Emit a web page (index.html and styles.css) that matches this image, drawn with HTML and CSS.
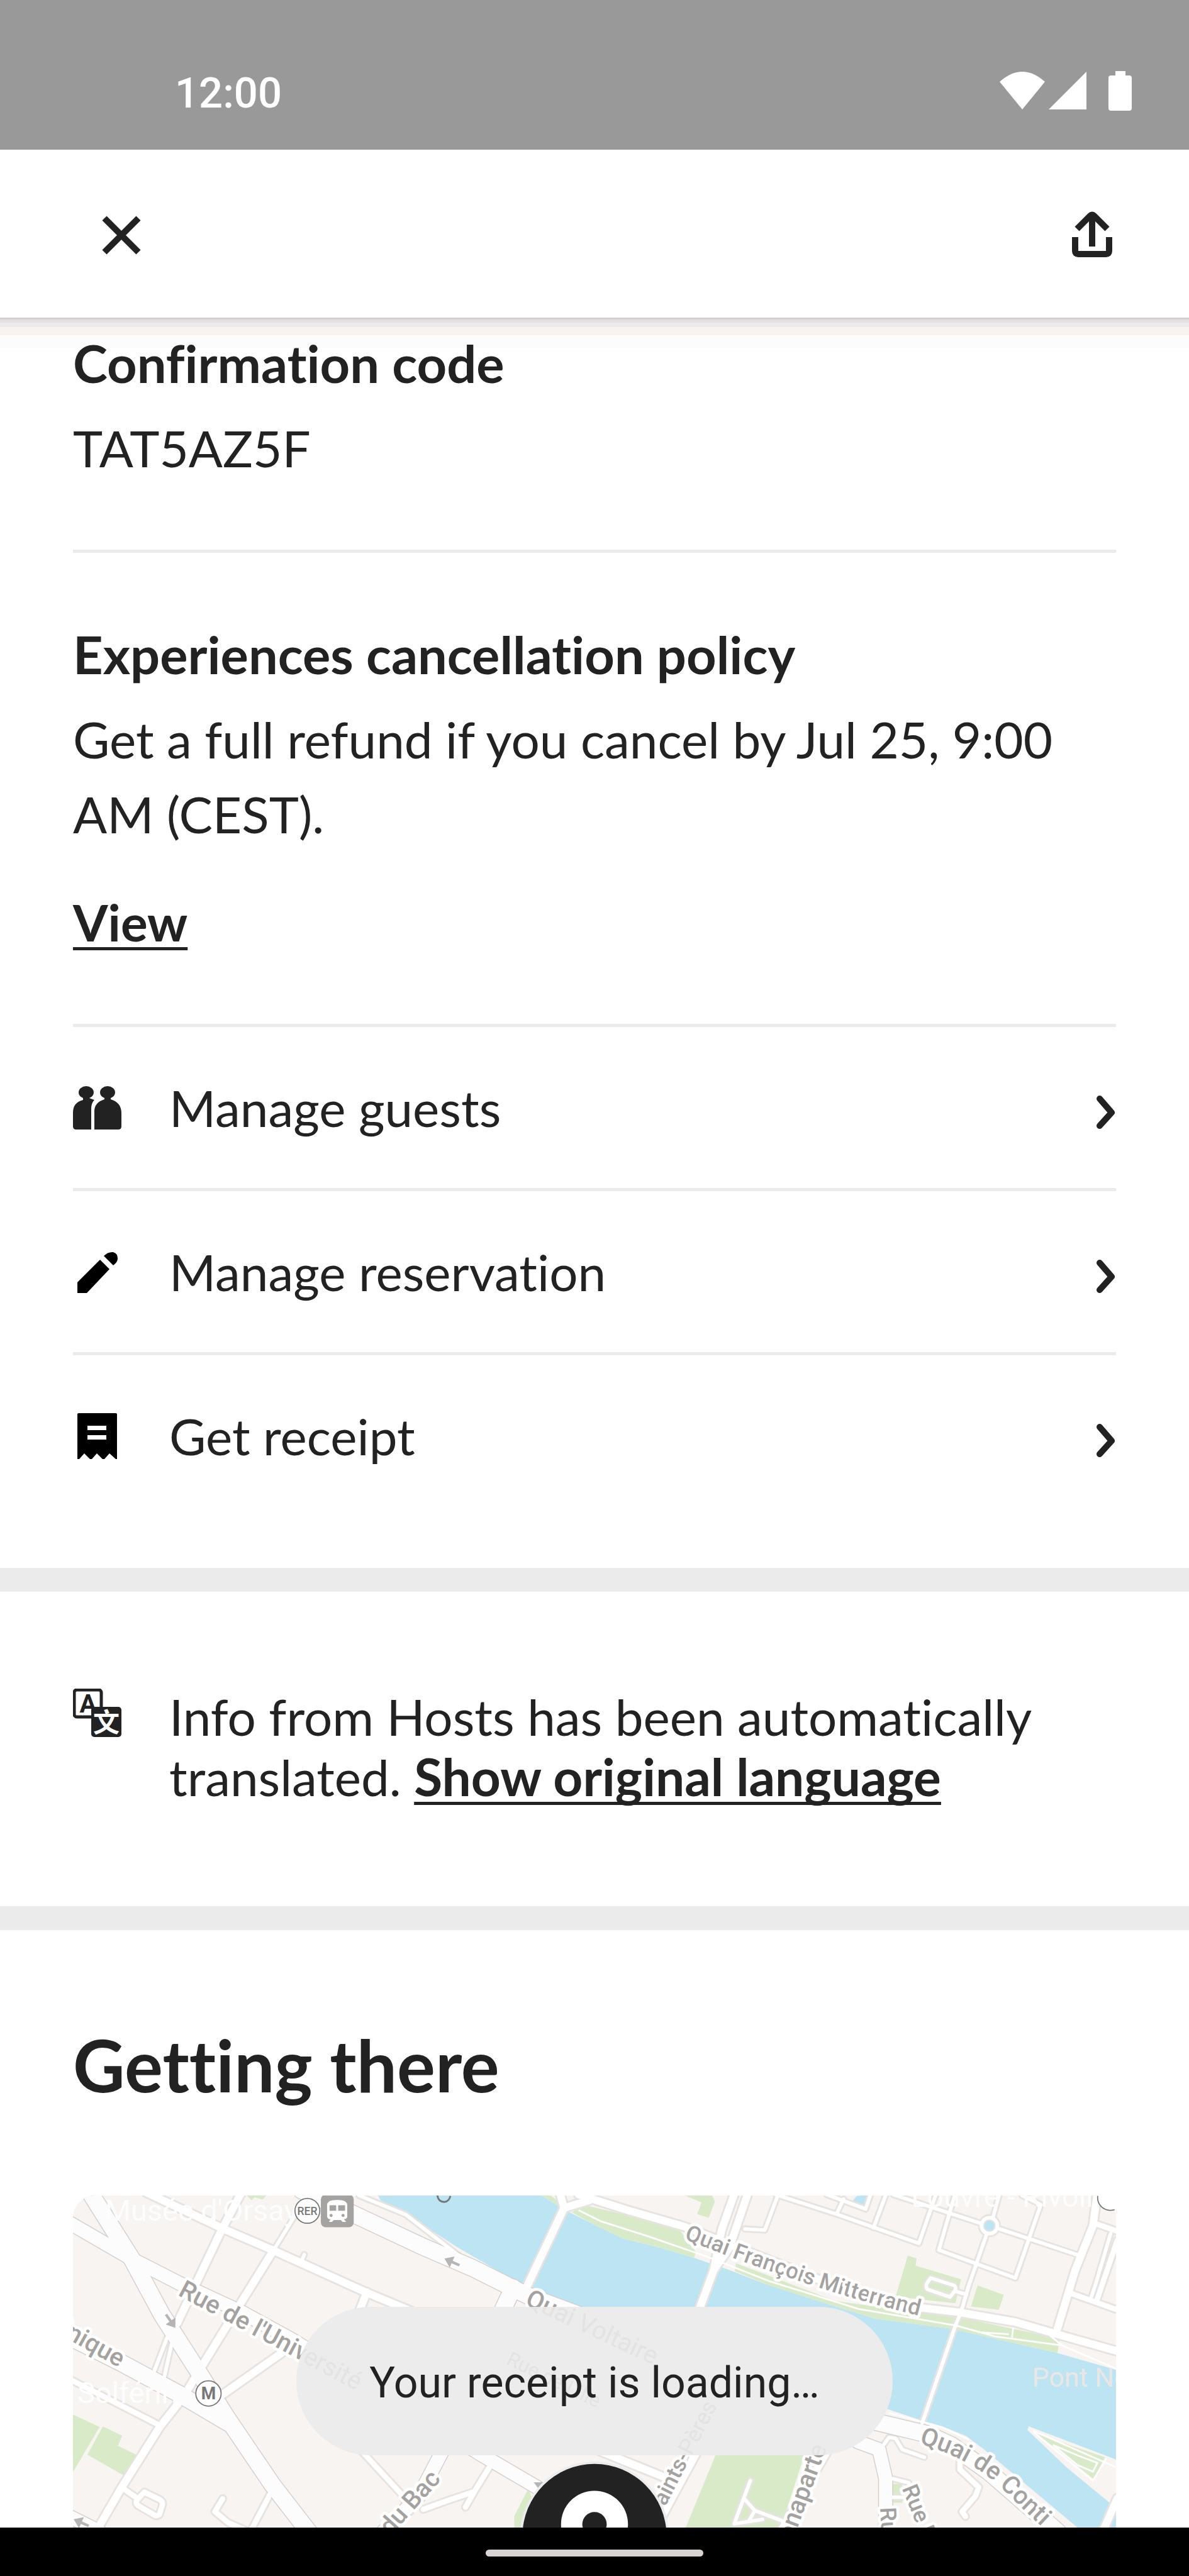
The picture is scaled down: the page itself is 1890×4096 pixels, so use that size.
FILE: index.html
```html
<!DOCTYPE html>
<html lang="en">
<head>
    <meta charset="UTF-8">
    <meta name="viewport" content="width=device-width, initial-scale=1.0">
    <title>Reservation details</title>
    <link rel="stylesheet" href="styles.css">
</head>
<body>
    <div class="status_bar">
        <span class="clock">12:00</span>
        <svg class="status_icons" viewBox="0 0 210 63">
            <path d="M0 17 Q36 -15 72 17 L36 61 Z"/>
            <path d="M78 61 L138 1 V61 Z"/>
            <path d="M184 0 H200 V7 H206 Q210 7 210 11 V59 Q210 63 206 63 H177 Q173 63 173 59 V11 Q173 7 177 7 H184 Z"/>
        </svg>
    </div>
    <header class="top_bar">
        <button class="icon_btn" type="button" aria-label="Close">
            <svg viewBox="0 0 78 78"><path d="M12 12 L66 66 M66 12 L12 66"/></svg>
        </button>
        <button class="icon_btn" type="button" aria-label="Share">
            <svg viewBox="0 0 78 78"><path d="M39 57 V8 M15 29 L36 8 Q39 5 42 8 L63 29 M12 42 V64 Q12 69 17 69 H61 Q66 69 66 64 V42"/></svg>
        </button>
    </header>

    <main>
        <section class="block first">
            <h2>Confirmation code</h2>
            <p>TAT5AZ5F</p>
        </section>
        <section class="block">
            <h2>Experiences cancellation policy</h2>
            <p>Get a full refund if you cancel by Jul 25, 9:00 AM (CEST).</p>
            <a class="view" href="#">View</a>
        </section>
        <nav class="rows">
            <a class="row" href="#">
                <svg class="icon" viewBox="0 0 77 77">
                    <ellipse cx="21" cy="14" rx="12" ry="10"/><ellipse cx="55" cy="14" rx="12" ry="10"/>
                    <path d="M16 20 H26 V23 L34 26 Q29 31 29 40 V73 H5 Q0 73 0 68 V46 Q0 30 16 26 Z"/>
                    <path d="M50 20 H60 V25 Q77 30 77 47 V68 Q77 73 72 73 H34 V44 Q34 30 50 25 Z"/>
                </svg>
                <span>Manage guests</span>
                <svg class="chevron" viewBox="0 0 32 77"><path d="M6 24 L25 46 L6 67"/></svg>
            </a>
            <a class="row" href="#">
                <svg class="icon black" viewBox="0 0 77 77">
                    <path d="M7 72 V55 L43 19 L58 34 L22 72 Z"/>
                    <path d="M49 13 Q56 6 64 7 Q71 9 71 17 Q71 23 64 28 Z"/>
                </svg>
                <span>Manage reservation</span>
                <svg class="chevron" viewBox="0 0 32 77"><path d="M6 24 L25 46 L6 67"/></svg>
            </a>
            <a class="row" href="#">
                <svg class="icon black" viewBox="0 0 77 77">
                    <path fill-rule="evenodd" d="M7 4 Q7 2 9 2 H68 Q70 2 70 4 V75 H68 L58 66 L50 75 H47 L38 66 L30 75 H27 L18 66 L10 75 H7 Z M23 22 V29 H53 V22 Z M23 37 V44 H53 V37 Z"/>
                </svg>
                <span>Get receipt</span>
                <svg class="chevron" viewBox="0 0 32 77"><path d="M6 24 L25 46 L6 67"/></svg>
            </a>
        </nav>
        <section class="translate">
            <svg class="icon" viewBox="0 0 77 77">
                <rect class="frame" x="2" y="2" width="43" height="43" rx="4"/>
                <text class="latin" x="24" y="38">A</text>
                <rect x="29" y="29" width="48" height="48" rx="5"/>
                <text class="han" x="53" y="69">文</text>
            </svg>
            <p>Info from Hosts has been automatically translated. <a href="#">Show original language</a></p>
        </section>
        <section class="there">
            <h1>Getting there</h1>
            <div class="map">
                <svg class="map_art" viewBox="0 64 4704 1498">
                    <defs>
                        <g id="streets">
                            <path class="w4" d="M330 50 L680 215 L900 310 L1320 500 L1560 600"/>
                            <path class="w4" d="M760 50 L670 220 L470 640"/>
                            <path class="w2" d="M1010 140 L905 310"/>
                            <path class="w4" d="M905 310 L750 560 L590 820 L500 970 L390 1110 L220 1380 L110 1570"/>
                            <path class="w2" d="M430 690 L365 860 M450 710 L410 890"/>
                            <path class="w4" d="M670 965 L940 775"/>
                            <path class="w3" d="M-10 895 L390 1100"/>
                            <path class="w3" d="M225 1385 L290 1430 M322 1402 L392 1436 Q408 1446 402 1464 L390 1502 Q382 1512 368 1506 L292 1462 Q280 1450 290 1436 Z"/>
                            <path class="w3" d="M675 1432 L640 1490 L700 1540 L780 1575 M895 1400 L800 1580"/>
                            <path class="w2" d="M1043 330 L1030 362"/>
                            <path class="w4" d="M1325 500 L1290 590"/>
                            <path class="w3" d="M1300 1215 L1480 1410 L1520 1490"/>
                            <path class="w3" d="M1890 1270 L1810 1400 L1690 1440 L1580 1480 M1810 1400 L1770 1470"/>
                            <path class="w4" d="M2360 1210 L2680 1340 M2820 1210 L2630 1560"/>
                            <path class="w2" d="M1290 64 L1500 150 L1740 335"/>
                            <path class="w4" d="M2280 60 L2500 130 L2760 205 L3000 300 L3560 520 L3820 570 L3990 590 L4250 635 L4440 690 L4704 765"/>
                            <path class="w4" d="M2195 50 L2215 120 L2040 490 M2330 85 L2215 120"/>
                            <path class="w4" d="M2985 50 L2925 220 L2890 400 L2820 590 M3045 50 L2960 300 L2890 400"/>
                            <path class="w2" d="M4040 470 L4005 590 L3980 650 L3830 1090"/>
                            <path class="w2" d="M3180 60 L3120 220 L3030 215 M3170 60 L3450 150 L3815 280 L3895 50 M3610 210 L3670 50 M3445 145 L3475 80 M3400 60 L3575 125 L3600 50"/>
                            <path class="w2" d="M3980 50 L3905 310 L4250 436 L4365 105 L4280 64 M3700 60 L4095 190 M4180 215 L4540 335 M4180 50 L4150 160 M4120 240 L4040 470"/>
                            <circle class="w2" cx="4133" cy="200" r="36"/>
                            <path class="w4" d="M4620 50 L4600 200 L4520 400 L4440 665"/>
                            <path class="w3" d="M4610 190 L4710 225 M4500 505 L4710 580 M4710 265 L4620 530"/>
                            <path class="w2" d="M4680 235 L4610 470 L4590 530"/>
                            <path class="w2" d="M3868 436 L3975 470 Q3986 480 3976 496 L3955 522 L3855 488 Q3845 480 3850 462 Z M3985 498 L4030 510"/>
                            <path class="w2" d="M3655 1190 L3680 1155 L3710 1160 L3740 1210 L3840 1245 M3690 1340 L3770 1360 M3690 1425 L3760 1425"/>
                            <path class="w3" d="M4000 1260 L4000 1300 L4085 1380 L4070 1420 L4010 1490 L4025 1512"/>
                            <path class="w2" d="M3055 1350 L3025 1430 L2982 1545 L3110 1525 M3025 1430 L3075 1485 L3050 1530 M3075 1485 L3220 1540"/>
                            <path class="w4" d="M3400 1220 L3180 1600 M4640 1590 L4710 1430"/>
                        </g>
                        <g id="avenues">
                            <path class="w7" d="M1030 40 L1270 150 L1568 290 L1800 390 L1960 470 L2060 520 L3000 870 L3620 1085 L3850 1140"/>
                            <path class="w7" d="M3850 1140 L3960 1190 L4130 1310 L4440 1580"/>
                            <path class="w7" d="M1985 480 L1920 620"/>
                            <path class="w7" d="M70 40 L265 350 L400 600 L560 850 L690 1060 L900 1370 L1070 1590"/>
                            <path class="w6" d="M-20 185 L265 350 L480 460 L760 590 L980 710 L1870 1250 L2160 1420"/>
                            <path class="w7" d="M-20 700 L220 820 L480 960 L700 1090"/>
                            <path class="w6" d="M1680 1190 L1560 1420 L1390 1590 M-10 1515 L120 1580"/>
                            <path class="w6" d="M3540 1175 L3635 1210 L3665 1340 L3665 1590"/>
                        </g>
                        <path id="mitterrand" d="M2755 260 L2975 345 Q3150 410 3360 478 T3830 610"/>
                        <path id="conti" d="M3815 1182 Q4060 1255 4200 1395 T4460 1640"/>
                    </defs>
                    <rect class="land" y="64" width="4704" height="1498"/>
                    <path class="water" d="M1374 60 L1395 100 L1480 135 L1568 190 L1738 300 L2005 455 L2090 490 L2140 520 L2290 565 L3681 1030 L3815 1075 L3920 1105 L4030 1150 L4110 1210 L4540 1570 H4710 V852 L4440 775 L4270 735 L3960 665 L3620 620 L3440 565 L3136 468 L2960 400 L2800 345 L2650 300 L2480 258 L2340 190 L2240 140 L2105 60 Z"/>
                    <path class="land" d="M4310 1105 L4710 1257 V1480 L4675 1450 L4480 1290 L4305 1122 Z"/>
                    <g class="green">
                        <path d="M2105 60 H2150 L2200 100 L2190 110 Z M2250 140 L2310 108 L2550 165 L2740 225 L2810 320 L2800 345 L2650 300 L2480 258 L2340 190 Z"/>
                        <path d="M2990 370 L3136 425 L3440 540 L3800 590 L3980 610 L4450 710 L4440 775 L4270 735 L3960 665 L3620 620 L3440 565 L3136 468 L2985 405 Z"/>
                        <path d="M0 1052 L120 1108 L0 1312 Z M135 1105 L222 1148 L202 1193 L290 1235 L230 1328 L65 1233 Z"/>
                        <path d="M780 60 H875 L855 82 L820 72 L805 85 Z M2750 60 H2880 L2895 90 L2867 165 L2815 148 L2835 95 Z"/>
                        <path d="M3765 335 L3805 348 L3800 380 L4005 442 L3980 550 L3710 520 Z M4080 470 L4198 512 L4175 580 L4050 565 Z"/>
                        <path d="M2900 1230 H3300 L3190 1570 H2760 Z M2055 1385 L1990 1510 V1562 H2110 Z"/>
                        <path d="M4350 1140 L4655 1245 L4605 1345 Z M3695 1365 H3740 V1450 H3695 Z"/>
                    </g>
                    <path class="water" d="M3510 95 L3565 110 L3590 60 L3535 66 Z"/>
                    <use href="#streets" class="edge"/>
                    <use href="#avenues" class="edge dark"/>
                    <use href="#streets" class="fill"/>
                    <use href="#avenues" class="fill soft"/>
                    <circle class="water" cx="4133" cy="200" r="22"/>
                    <path class="trail" d="M2280 130 L2380 180 L2600 250 L2860 340 L3140 450 L3540 575 L3980 650 L4160 700 L4460 740 L4704 845 M4080 680 L4220 690 M4240 660 L4235 705 M4400 690 L4460 740 M3681 1045 L3920 1110 L4040 1165 M4330 1125 L4704 1290 M4330 1130 L4600 1350 L4660 1250 M4420 1190 L4540 1240 L4620 1270 L4600 1310 L4530 1280 Z"/>
                    <g class="arrow">
                        <path d="M-36 -6 H0 V-27 L38 0 L0 27 V6 H-36 Z" transform="translate(440 630) rotate(55)"/>
                        <path d="M-36 -6 H0 V-27 L38 0 L0 27 V6 H-36 Z" transform="translate(1710 364) rotate(204)"/>
                        <path d="M-36 -6 H0 V-27 L38 0 L0 27 V6 H-36 Z" transform="translate(38 1540) rotate(204)"/>
                        <path d="M2078 1358 H2150 L2105 1395 Z"/>
                    </g>
                    <g class="street_name">
                        <text class="big" transform="translate(470 512) rotate(28)">Rue de l'Université</text>
                        <text class="big end" transform="translate(207 840) rotate(29)">Dominique</text>
                        <text class="big" transform="translate(2035 555) rotate(25)">Quai Voltaire</text>
                        <text><textPath href="#mitterrand">Quai François Mitterrand</textPath></text>
                        <text class="big"><textPath href="#conti">Quai de Conti</textPath></text>
                        <text class="big end" transform="translate(1662 1345) rotate(-48)">Rue du Bac</text>
                        <text class="end" transform="translate(2905 1010) rotate(-63)">Saints-Pères</text>
                        <text class="big end" transform="translate(3400 1200) rotate(-70)">Bonaparte</text>
                        <text transform="translate(3738 1385) rotate(68)">Rue M</text>
                        <text transform="translate(3640 1472) rotate(87)">Rue</text>
                    </g>
                    <g class="place">
                        <text x="145" y="178">Musée d'Orsay</text>
                        <text x="20" y="1000">Solférin</text>
                        <text x="3780" y="115">Louvre - Rivoli</text>
                        <text class="dim" x="4325" y="927">Pont Neuf</text>
                    </g>
                    <g class="stop">
                        <circle cx="1057" cy="133" r="56"/><circle cx="611" cy="957" r="57"/><circle cx="4678" cy="74" r="57"/>
                        <path d="M1643 60 Q1646 93 1676 93 Q1697 90 1702 66"/>
                        <text class="rer" x="1057" y="151">RER</text>
                        <text class="metro" x="611" y="984">M</text>
                    </g>
                    <rect class="train" x="1118" y="60" width="148" height="147" rx="22"/>
                    <path class="train_body" fill-rule="evenodd" d="M1146 105 Q1148 84 1192 84 Q1234 84 1237 105 V160 Q1236 170 1222 171 L1232 183 H1216 L1208 175 H1176 L1168 183 H1154 L1162 171 Q1147 170 1146 158 Z M1157 108 V133 H1187 V108 Z M1196 108 V133 H1227 V108 Z"/>
                    <circle class="train" cx="1164" cy="154" r="7"/><circle class="train" cx="1218" cy="154" r="7"/>
                    <circle class="pin_glow" cx="2352" cy="1600" r="336"/>
                    <circle class="pin" cx="2352" cy="1600" r="325"/>
                    <circle class="pin_ring" cx="2352" cy="1547" r="151"/>
                    <circle class="pin" cx="2352" cy="1547" r="55"/>
                </svg>
                <div class="toast" role="status">
                    <svg viewBox="1008 565 2688 668">
                        <g class="street_name ghost">
                            <text class="big" transform="translate(470 512) rotate(28)">Rue de l'Université</text>
                            <text class="big" transform="translate(2035 555) rotate(25)">Quai Voltaire</text>
                            <text class="small" transform="translate(1950 820) rotate(26)">Rue de Lille</text>
                            <text class="end" transform="translate(2905 1010) rotate(-63)">Saints-Pères</text>
                            <text class="big end" transform="translate(3400 1200) rotate(-70)">Bonaparte</text>
                        </g>
                    </svg>
                    <span>Your receipt is loading…</span>
                </div>
            </div>
        </section>
    </main>
    <div class="nav_bar"><span class="handle"></span></div>
</body>
</html>
```
FILE: styles.css
```css
* { box-sizing: border-box; }
body { margin: 0; min-height: 100vh; display: flex; flex-direction: column; background: #fff; color: #222;
    font-family: Lato, "Liberation Sans", sans-serif; font-size: 80px; line-height: 119px; font-variant-ligatures: none; }
h1, h2, p { margin: 0; }
a { color: inherit; text-decoration: none; }
svg { display: block; }
main { position: relative; }

.status_bar { display: flex; align-items: flex-end; justify-content: space-between; height: 238px; padding: 0 91px 62px 278px; background: #999; color: #fff; }
.clock { font-family: Roboto, sans-serif; font-size: 67px; line-height: 56px; font-weight: 500; }
.status_icons { width: 210px; height: 63px; fill: #fff; }

.top_bar { position: relative; display: flex; align-items: center; justify-content: space-between; height: 267px; padding: 4px 115px 0 154px; background: #fff; }
/* stepped shadow under the bar */
.top_bar::after { content: ""; position: absolute; left: 0; right: 0; top: 100%; height: 48px;
    background: linear-gradient(#d5cfcf 0 3px, #e5e1e1 3px 8px, #ebebeb 8px 15px, #f8f3f1 15px 28px, #fcfcfc 28px 48px); }
.icon_btn { padding: 0; border: 0; background: none; cursor: pointer; }
.icon_btn svg { width: 78px; height: 78px; fill: none; stroke: #222; stroke-width: 10; }

.block { margin: 0 116px; padding: 102px 0; border-bottom: 5px solid #ebebeb; }
.block.first { padding-top: 13px; }
h2 { margin-bottom: 16px; font-size: 83px; font-weight: 700; }
.view, .translate a { font-weight: 700; text-decoration: underline; text-decoration-thickness: 5px; text-underline-offset: 9px; text-decoration-skip-ink: none; }
.view { display: block; width: fit-content; margin-top: 53px; }

.rows { padding: 0 116px 82px; }
.row { display: flex; align-items: center; gap: 76px; height: 261px; border-bottom: 5px solid #ebebeb; }
.row:last-child { height: 256px; border-bottom: 0; }
.row span { flex: 1; }
.icon { flex: none; width: 77px; height: 77px; fill: #222; }
.icon.black { fill: #000; }
.chevron { width: 32px; height: 77px; fill: none; stroke: #222; stroke-width: 10; stroke-linecap: round; stroke-linejoin: round; }

.translate { display: flex; align-items: flex-start; gap: 76px; padding: 150px 116px 158px; border: solid #ebebeb; border-width: 38px 0; line-height: 96px; }
.translate .icon { margin-top: 4px; }
.translate a { font-size: 82px; line-height: 80px; }
.icon .frame { fill: none; stroke: #222; stroke-width: 5; }
.icon .latin { font: 700 40px Roboto, sans-serif; text-anchor: middle; }
.icon .han { font: 700 42px "Noto Sans CJK SC", sans-serif; text-anchor: middle; fill: #fff; }

.there { padding: 151px 116px 0; }
h1 { margin-bottom: 145px; font-size: 114px; line-height: 126px; font-weight: 700; }
.map { position: relative; }
.map_art { width: 100%; border-radius: 35px 35px 0 0; }

/* map drawing */
.land { fill: #f7f4f2; }
.water { fill: #bce4f2; }
.green { fill: #d9eac9; }
.w2 { stroke-width: calc(16px + var(--edge)); }
.w3 { stroke-width: calc(24px + var(--edge)); }
.w4 { stroke-width: calc(34px + var(--edge)); }
.w6 { stroke-width: calc(60px + var(--edge)); }
.w7 { stroke-width: calc(74px + var(--edge)); }
.edge, .fill { fill: none; stroke-linecap: round; stroke-linejoin: round; }
.edge { --edge: 16px; stroke: #e6e3e1; }
.edge.dark { --edge: 8px; stroke: #d3cfce; }
.fill { --edge: 0px; stroke: #fff; }
.fill.soft { stroke: #fcfcfc; }
.trail { fill: none; stroke: #fff; stroke-width: 8; }
.arrow { fill: #b7b5b4; }
.street_name { font: 500 101px Roboto, sans-serif; fill: #a4a2a0; stroke: #fff; stroke-width: 26px; stroke-linejoin: round; paint-order: stroke; }
.street_name.ghost { font-weight: 400; fill: #e4e3e2; stroke: none; }
.street_name .big { font-size: 113px; }
.street_name .small { font-size: 90px; }
.end { text-anchor: end; }
.place { font: 400 133px Roboto, sans-serif; fill: #fdfdfd; }
.place .dim { font-size: 122px; fill: #e9e7e6; }
.stop circle { fill: #fff; stroke: #777; stroke-width: 5; }
.stop path { fill: none; stroke: #777; stroke-width: 8; }
.stop text { font: 700 50px Roboto, sans-serif; fill: #777; text-anchor: middle; }
.stop .rer { font-weight: 500; }
.stop .metro { font-size: 76px; }
.train { fill: #a5a3a1; }
.train_body { fill: #fff; }
.pin { fill: #222; }
.pin_glow { fill: #ececec; }
.pin_ring { fill: #fff; }

.toast { position: absolute; left: 50%; bottom: 115px; transform: translateX(-50%); display: flex; align-items: center; justify-content: center;
    width: 948px; height: 236px; padding-top: 6px; border-radius: 118px; background: #ececec; overflow: hidden; }
.toast svg { position: absolute; inset: 0; width: 100%; height: 100%; }
.toast span { position: relative; font: 400 68px/80px Roboto, sans-serif; }

.nav_bar { display: flex; flex: 1; align-items: center; justify-content: center; min-height: 78px; padding-top: 4px; background: #000; }
.handle { width: 346px; height: 11px; border-radius: 6px; background: #d8d4d4; }
```
